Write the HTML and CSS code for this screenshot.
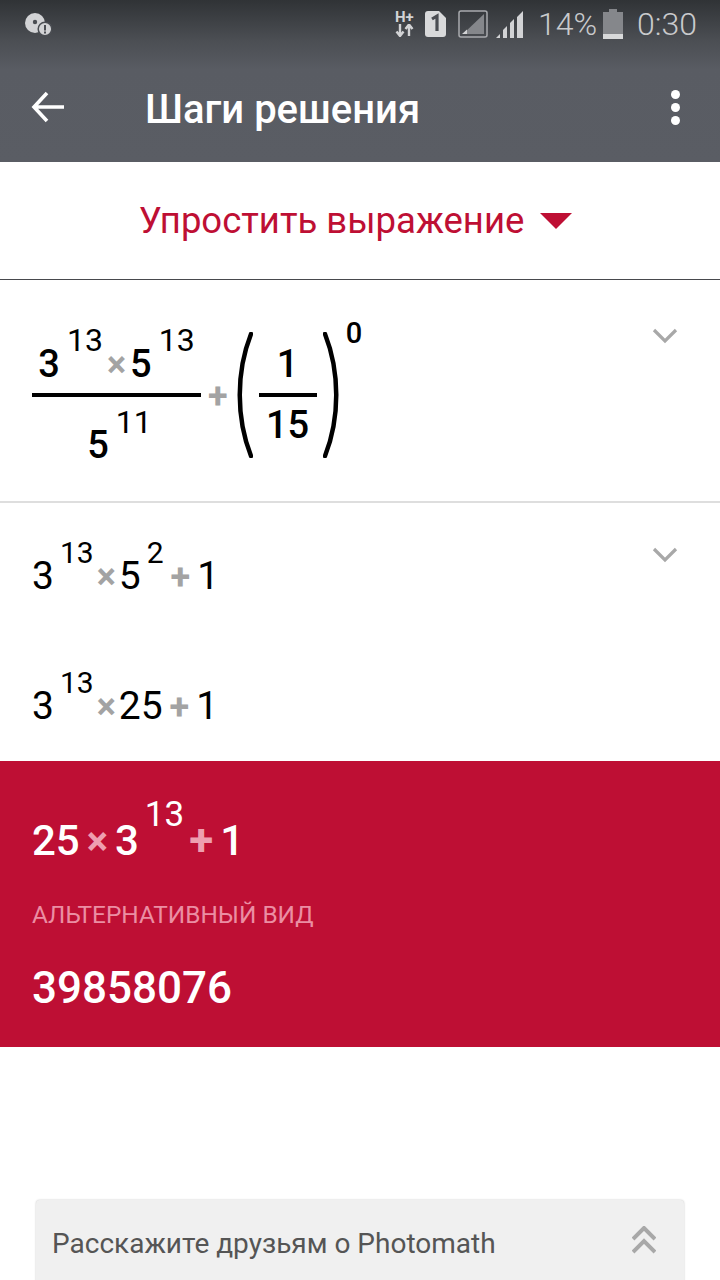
FILE: index.html
```html
<!DOCTYPE html>
<html lang="en">
<head>
    <meta charset="UTF-8">
    <meta name="viewport" content="width=device-width, initial-scale=1.0">
    <title>Шаги решения</title>
    <link rel="stylesheet" href="styles.css">
</head>
<body>
    <header class="top">
        <div class="status">
            <svg class="ic-disc" width="27" height="23" viewBox="0 0 27 23">
                <circle cx="10" cy="10" r="10" fill="#d2d3d5"/>
                <circle cx="10" cy="9" r="2.200" fill="#4a4d52"/>
                <circle cx="20" cy="16" r="6.800" fill="#d2d3d5" stroke="#4a4d52" stroke-width="1.500"/>
                <rect x="19" y="12" width="2" height="5.500" fill="#4a4d52"/>
                <rect x="19" y="18.500" width="2" height="2" fill="#4a4d52"/>
            </svg>
            <div class="status-right">
                <div class="ic-net">
                    <span class="hplus">H+</span>
                    <svg width="20" height="13" viewBox="0 0 20 13">
                        <path d="M5 0v12M1.500 7.500L5 12l3.500-4.500M14 12V1M10.500 5L14 .5 17.500 5" fill="none" stroke="#d2d3d5" stroke-width="2.400"/>
                    </svg>
                </div>
                <svg class="ic-sim" width="21" height="26" viewBox="0 0 21 26">
                    <path d="M3 0h11l7 7v16a3 3 0 0 1-3 3H3a3 3 0 0 1-3-3V3a3 3 0 0 1 3-3z" fill="#d8d9da"/>
                    <path d="M7 8l5-3v15" fill="none" stroke="#4a4d52" stroke-width="3.200"/>
                </svg>
                <svg class="ic-box" width="30" height="28" viewBox="0 0 30 28">
                    <rect x="1" y="1" width="28" height="26" rx="2" fill="none" stroke="#a9abae" stroke-width="1.500"/>
                    <path d="M26 4v20H5z" fill="#85878b"/>
                    <path d="M9 19.500V24H4z" fill="#d2d3d5"/>
                </svg>
                <svg class="ic-signal" width="27" height="27" viewBox="0 0 27 27">
                    <path d="M0 27l4-4v4zM7 27v-8l4-4v12zM14 27V12l4-4v19zM21 27V6l6-6v27z" fill="#d2d3d5"/>
                </svg>
                <span class="pct">14%</span>
                <svg class="ic-batt" width="20" height="30" viewBox="0 0 20 30">
                    <path d="M6 0h8v3h6v27H0V3h6z" fill="#85878b"/>
                    <rect y="25" width="20" height="5" fill="#d8d9da"/>
                </svg>
                <span class="time">0:30</span>
            </div>
        </div>
        <div class="toolbar">
            <svg class="back" width="34" height="32" viewBox="0 0 34 32">
                <path d="M33 16H3M16 2L3 16l13 14" fill="none" stroke="#fff" stroke-width="3.600"/>
            </svg>
            <h1>Шаги решения</h1>
            <div class="more"><i></i><i></i><i></i></div>
        </div>
    </header>

    <div class="mode">
        <span>Упростить выражение</span>
        <svg width="32" height="16" viewBox="0 0 32 16"><path d="M0 0h32L16 16z" fill="#be0f34"/></svg>
    </div>

    <section class="step step-one">
        <div class="math">
            <div class="frac wide">
                <div class="num"><span>3</span><sup>13</sup><b class="x">×</b><span>5</span><sup>13</sup></div>
                <div class="bar"></div>
                <div class="den"><span>5</span><sup>11</sup></div>
            </div>
            <b class="plus">+</b>
            <svg class="paren" width="16" height="126" viewBox="0 0 16 126"><path d="M14 2C-1 40-1 86 14 124" fill="none" stroke="#000" stroke-width="4.500" stroke-linecap="round"/></svg>
            <div class="frac small">
                <div class="num"><span>1</span></div>
                <div class="bar"></div>
                <div class="den"><span>15</span></div>
            </div>
            <svg class="paren" width="16" height="126" viewBox="0 0 16 126"><path d="M2 2C17 40 17 86 2 124" fill="none" stroke="#000" stroke-width="4.500" stroke-linecap="round"/></svg>
            <span class="zero">0</span>
        </div>
        <svg class="chev" width="26" height="16" viewBox="0 0 26 16"><path d="M2 2l11 11L24 2" fill="none" stroke="#a8a8a8" stroke-width="3.200"/></svg>
    </section>

    <section class="step step-two">
        <div class="line"><span>3</span><sup>13</sup><b class="x">×</b><span>5</span><sup>2</sup><b class="plus">+</b><span>1</span></div>
        <svg class="chev" width="26" height="16" viewBox="0 0 26 16"><path d="M2 2l11 11L24 2" fill="none" stroke="#a8a8a8" stroke-width="3.200"/></svg>
    </section>

    <section class="step step-three">
        <div class="line"><span>3</span><sup>13</sup><b class="x">×</b><span>25</span><b class="plus">+</b><span>1</span></div>
    </section>

    <section class="result">
        <div class="line"><span>25</span><b class="x">×</b><span>3</span><sup>13</sup><b class="plus">+</b><span>1</span></div>
        <div class="alt-label">АЛЬТЕРНАТИВНЫЙ ВИД</div>
        <div class="alt-value">39858076</div>
    </section>

    <div class="share">
        <span>Расскажите друзьям о Photomath</span>
        <svg width="24" height="28" viewBox="0 0 24 28"><path d="M1 13L12 2l11 11M1 26l11-11 11 11" fill="none" stroke="#a8a8a8" stroke-width="4"/></svg>
    </div>
</body>
</html>
```

FILE: styles.css
```css
* {
    box-sizing: border-box;
}
html, body {
    height: 1280px;
    overflow: hidden;
}
body {
    margin: 0;
    background: #fff;
    color: #000;
    font-family: Roboto, sans-serif;
}
sup {
    font-size: 30px;
    line-height: 0;
    vertical-align: 25px;
    margin-left: 6px;
}

/* top bars */
.top {
    height: 162px;
    background: linear-gradient(#303336 0, #4b4e53 40px, #595c63 70px, #5a5d64 100%);
}
.status {
    height: 48px;
    display: flex;
    justify-content: space-between;
    align-items: center;
    padding: 0 23px 0 25px;
    color: #c9cacc;
}
.status-right {
    display: flex;
    align-items: center;
}
.ic-net {
    width: 20px;
    display: flex;
    flex-direction: column;
    gap: 1px;
}
.ic-net svg {
    display: block;
}
.hplus {
    font-size: 15px;
    font-weight: 700;
    line-height: 12px;
    color: #d2d3d5;
}
.ic-sim {
    margin-left: 10px;
}
.ic-box {
    margin-left: 12px;
}
.ic-signal {
    margin-left: 8px;
}
.pct, .time {
    font-size: 32px;
    font-weight: 300;
}
.pct {
    margin-left: 15px;
}
.ic-batt {
    margin-left: 6px;
}
.time {
    margin-left: 14px;
}
.toolbar {
    height: 114px;
    display: flex;
    align-items: center;
    padding: 4px 40px 0 31px;
}
.toolbar h1 {
    margin: 0 0 0 80px;
    padding-top: 4px;
    color: #fff;
    font-size: 40px;
    font-weight: 500;
    flex: 1;
}
.more {
    display: flex;
    flex-direction: column;
    gap: 4px;
}
.more i {
    width: 9px;
    height: 9px;
    border-radius: 50%;
    background: #fff;
}

/* dropdown */
.mode {
    height: 118px;
    display: flex;
    justify-content: center;
    align-items: center;
    gap: 16px;
    padding-right: 9px;
    border-bottom: 1px solid #47494d;
    color: #be0f34;
    font-size: 36.500px;
}

/* steps */
.step {
    display: flex;
    justify-content: space-between;
    padding: 0 42px 0 32px;
    font-size: 39px;
}
.step-one {
    height: 223px;
    border-bottom: 2px solid #dedede;
    padding-top: 52px;
}
.step-two {
    height: 130px;
}
.step-three {
    height: 128px;
}
.step-two .line, .step-three .line {
    padding-top: 50px;
}
.step-two sup, .step-three sup {
    vertical-align: 26px;
}
.step-one .chev {
    margin-top: -4px;
}
.step-two .chev {
    margin-top: 44px;
}
.line {
    line-height: 44px;
    white-space: nowrap;
}
.x, .plus {
    font-weight: 700;
    color: #a3a3a3;
    font-size: 36px;
    margin: 0 3px;
}
.line .plus {
    margin: 0 7px;
}

/* fractions */
.math {
    display: flex;
    align-items: flex-start;
    height: 126px;
    font-weight: 500;
    font-size: 38px;
}
.frac {
    display: flex;
    flex-direction: column;
    align-items: center;
    white-space: nowrap;
}
.frac .num {
    height: 61px;
    line-height: 65px;
}
.frac .den {
    line-height: 61px;
}
.frac .bar {
    height: 4px;
    align-self: stretch;
    background: #000;
}
.wide {
    width: 169px;
}
.wide .x {
    margin: 0 4px;
}
.wide .den {
    padding: 18px 0 0 6px;
}
.small {
    width: 58px;
    margin: 0 6px;
}
.small .den {
    margin-top: -2px;
}
.math > .plus {
    margin: 42px 9px 0 7px;
    line-height: 44px;
}
.math sup {
    font-size: 32px;
    font-weight: 400;
    margin-left: 7px;
}
.math .num sup {
    vertical-align: 26px;
}
.zero {
    font-size: 29px;
    line-height: 28px;
    margin: -13px 0 0 7px;
}

/* answer */
.result {
    height: 286px;
    background: #be0f34;
    color: #fff;
    padding: 54px 32px 0;
    font-size: 42px;
    font-weight: 500;
}
.result sup {
    font-size: 35px;
    vertical-align: 29px;
    font-weight: 400;
    margin-left: 6px;
}
.result .x, .result .plus {
    color: #ee9fb0;
    font-size: 40px;
}
.result .x {
    margin: 0 7px;
}
.result .plus {
    font-size: 44px;
    margin: 0 7px 0 5px;
}
.alt-label {
    margin-top: 36px;
    font-size: 24.400px;
    font-weight: 400;
    color: #eb8ea3;
}
.alt-value {
    margin-top: 33px;
    font-size: 44px;
}

/* share card */
.share {
    margin: 153px 36px 0;
    height: 120px;
    background: #f0f0f0;
    border-radius: 4px 4px 0 0;
    box-shadow: 0 0 2px rgba(0,0,0,0.25);
    display: flex;
    justify-content: space-between;
    align-items: flex-start;
    padding: 27px 28px 0 16px;
    font-size: 28px;
    color: #555;
}
.share svg {
    margin-top: -1px;
}
```
